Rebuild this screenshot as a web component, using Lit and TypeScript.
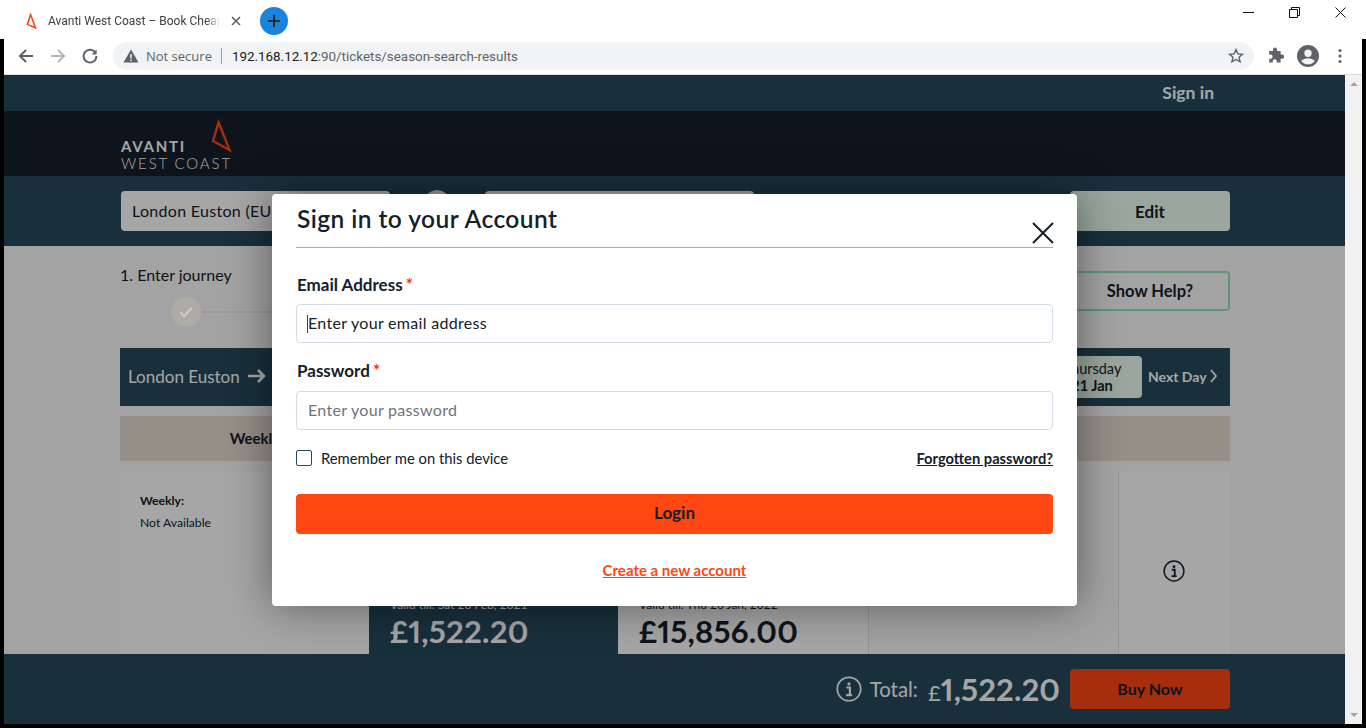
import { LitElement, html, css, svg } from 'lit';
import { customElement } from 'lit/decorators.js';

const infoIcon = (size: number) => html`
  <svg width=${size} height=${size} viewBox="0 0 24 24" fill="none" stroke="currentColor" stroke-width="1.6">
    <circle cx="12" cy="12" r="10.8"></circle>
    <circle cx="12" cy="7.3" r="1.5" fill="currentColor" stroke="none"></circle>
    <path d="M9.6 10.6h3.2v6.6M9.4 17.6h5.4" stroke-width="2"></path>
  </svg>`;

const chevron = svg`<path d="M1 1l5 6-5 6" fill="none" stroke="currentColor" stroke-width="1.8"></path>`;

@customElement('browser-chrome')
export class BrowserChrome extends LitElement {
  static styles = css`
    :host {
      display: block;
      height: 75px;
      background: #000;
      font-family: 'Open Sans', 'Noto Sans', sans-serif;
    }
    .tabs {
      height: 39px;
      box-sizing: border-box;
      background: #fff;
      display: flex;
      align-items: center;
      padding: 2px 0 0 26px;
    }
    .fav { margin-right: 11px; margin-top: 1px; }
    .title {
      width: 172px;
      font-family: Roboto, sans-serif;
      font-size: 12px;
      color: #3c4043;
      white-space: nowrap;
      -webkit-mask-image: linear-gradient(90deg, #000 92%, transparent);
      mask-image: linear-gradient(90deg, #000 92%, transparent);
    }
    .tab-x { margin-left: 11px; }
    .new-tab {
      margin-left: 19px;
      width: 28px;
      height: 28px;
      border-radius: 50%;
      background: #1a84dc;
      display: flex;
      align-items: center;
      justify-content: center;
    }
    .win {
      margin-left: auto;
      display: flex;
      align-items: center;
      gap: 35px;
      padding-right: 20px;
      margin-top: -17px;
    }
    .bar {
      height: 36px;
      display: flex;
      align-items: center;
      margin: 0 4px;
      background: #fff;
      border-bottom: 1px solid #dadce0;
      box-sizing: border-box;
      padding: 0 0 1px 13px;
    }
    .nav { display: flex; gap: 14px; margin-right: 14px; }
    .omni {
      width: 1141px;
      height: 28px;
      border-radius: 14px;
      background: #f1f3f4;
      display: flex;
      align-items: center;
      padding: 0 10px 0 10px;
      box-sizing: border-box;
      font-family: Roboto, sans-serif;
      font-size: 13.4px;
      color: #5f6368;
    }
    .secure { margin: 0 9px 0 0; color: #5f6368; font-family: 'Open Sans', sans-serif; font-size: 13px; }
    .sep { width: 1px; height: 16px; background: #9aa0a6; margin-right: 10px; }
    .host { color: #202124; }
    .star { margin-left: auto; margin-right: 0; }
    .tools { display: flex; align-items: center; margin-left: 12px; gap: 13px; }
  `;

  render() {
    return html`
      <div class="tabs">
        <svg class="fav" width="11" height="16" viewBox="0 0 11 16" fill="none" stroke="#ff4713" stroke-width="1.6">
          <path d="M4.6 1.6 1.4 11.4l8 3.4z"></path>
        </svg>
        <span class="title">Avanti West Coast – Book Cheap</span>
        <svg class="tab-x" width="10" height="10" viewBox="0 0 10 10" stroke="#5f6368" stroke-width="1.6"><path d="M1 1l8 8M9 1l-8 8"></path></svg>
        <span class="new-tab">
          <svg width="14" height="14" viewBox="0 0 14 14" stroke="#1f2a33" stroke-width="2"><path d="M7 1v12M1 7h12"></path></svg>
        </span>
        <div class="win">
          <svg width="11" height="11" viewBox="0 0 11 11" stroke="#111"><path d="M0 5.5h11"></path></svg>
          <svg width="11" height="11" viewBox="0 0 11 11" fill="none" stroke="#111"><path d="M.5 2.5h8v8h-8zM2.5 2.5v-2h8v8h-2"></path></svg>
          <svg width="11" height="11" viewBox="0 0 11 11" stroke="#111"><path d="M.5.5l10 10M10.5.5l-10 10"></path></svg>
        </div>
      </div>
      <div class="bar">
        <div class="nav">
          <svg width="18" height="18" viewBox="0 0 18 18" fill="none" stroke="#5f6368" stroke-width="2"><path d="M16 9H3M9 3 3 9l6 6"></path></svg>
          <svg width="18" height="18" viewBox="0 0 18 18" fill="none" stroke="#b4b7ba" stroke-width="2"><path d="M2 9h13M9 3l6 6-6 6"></path></svg>
          <svg width="18" height="18" viewBox="0 0 18 18" fill="none" stroke="#5f6368" stroke-width="2"><path d="M14.6 6A6.4 6.4 0 1 0 15.4 9"></path><path d="M15.6 2.4v5h-5z" fill="#5f6368" stroke="none"></path></svg>
        </div>
        <div class="omni">
          <svg width="16" height="14" viewBox="0 0 16 14" style="margin-right:7px"><path d="M8 .5 15.5 13.5H.5z" fill="#5f6368"></path><path d="M8 5v4.4M8 10.4v1.6" stroke="#f1f3f4" stroke-width="1.5"></path></svg>
          <span class="secure">Not secure</span>
          <span class="sep"></span>
          <span><span class="host">192.168.12.12</span>:90/tickets/season-search-results</span>
          <svg class="star" width="16" height="16" viewBox="0 0 16 16" fill="none" stroke="#5f6368" stroke-width="1.4"><path d="M8 1.6l1.9 4.3 4.6.4-3.5 3 1.1 4.6L8 11.5l-4.1 2.4L5 9.3l-3.5-3 4.6-.4z"></path></svg>
        </div>
        <div class="tools">
          <svg width="18" height="18" viewBox="0 0 18 18" fill="#5f6368"><path d="M7 2.6a2 2 0 0 1 4 0V4h3.6v3.6H16a2.1 2.1 0 0 1 0 4.2h-1.4v3.8h-3.8v-1.3a2 2 0 0 0-4 0v1.3H3.2v-3.8h1.3a2.1 2.1 0 0 0 0-4.2H3.2V4H7z"></path></svg>
          <svg width="22" height="22" viewBox="0 0 24 24"><circle cx="12" cy="12" r="12" fill="#5f6368"></circle><circle cx="12" cy="9" r="4" fill="#f1f3f4"></circle><path d="M4.6 17.4c3.5-3.8 11.3-3.8 14.8 0a9.2 9.2 0 0 1-14.8 0z" fill="#f1f3f4"></path></svg>
          <svg width="16" height="16" viewBox="0 0 16 16" fill="#5f6368"><circle cx="8" cy="2.5" r="1.6"></circle><circle cx="8" cy="8" r="1.6"></circle><circle cx="8" cy="13.5" r="1.6"></circle></svg>
        </div>
      </div>
    `;
  }
}

@customElement('ticket-page')
export class TicketPage extends LitElement {
  static styles = css`
    :host {
      display: flex;
      flex-direction: column;
      height: 649px;
      background: #fbfbfb;
      color: #14202a;
      font-family: Lato, sans-serif;
      overflow: hidden;
    }
    .signin {
      height: 36px;
      flex: none;
      box-sizing: border-box;
      padding: 0 131px 2px 0;
      background: #264a5c;
      color: #fff;
      font-weight: 700;
      font-size: 17.5px;
      display: flex;
      align-items: center;
      justify-content: flex-end;
    }
    .brand {
      height: 65px;
      flex: none;
      background: #14202a;
      padding-left: 117px;
      display: flex;
      align-items: flex-start;
      color: #fff;
    }
    .logo { position: relative; width: 112px; height: 65px; }
    .avanti { position: absolute; left: 0; top: 27px; font-size: 15px; font-weight: 700; letter-spacing: 1.75px; line-height: 16px; }
    .west { position: absolute; left: 0; top: 44px; font-size: 15px; font-weight: 300; letter-spacing: 1.85px; line-height: 16px; white-space: nowrap; }
    .logo svg { position: absolute; left: 88px; top: 8px; }
    .search {
      height: 70px;
      flex: none;
      background: #264a5c;
      padding: 15px 115px 0 117px;
      box-sizing: border-box;
      display: flex;
      align-items: flex-start;
    }
    .field {
      width: 269px;
      height: 40px;
      box-sizing: border-box;
      border-radius: 4px;
      background: #fff;
      padding: 0 11px;
      line-height: 40px;
      font-size: 16px;
      letter-spacing: .3px;
    }
    .swap { width: 32px; height: 42px; margin: -1px 32px 0 31px; border-radius: 50%; background: #e8eef0; }
    .edit {
      margin-left: auto;
      width: 160px;
      height: 40px;
      border-radius: 4px;
      background: #edfff3;
      font-weight: 700;
      font-size: 17px;
      text-align: center;
      line-height: 41px;
    }
    .body { flex: 1; min-height: 0; padding: 0 115px 0 116px; overflow: hidden; }
    .steps { height: 102px; display: flex; justify-content: space-between; position: relative; }
    .step { padding: 18px 0 0; font-size: 16px; line-height: 22px; }
    /* sits above the dim layer, the reference keeps its tick bright */
    .tick {
      position: relative;
      z-index: 1;
      width: 30px; height: 30px; border-radius: 50%;
      background: #aeaaa5; margin: 11px 0 0 51px;
      display: flex; align-items: center; justify-content: center;
    }
    .line { position: absolute; left: 80px; top: 65px; width: 400px; height: 2px; background: #f1eae2; }
    .help {
      margin-top: 25px;
      width: 160px; height: 40px; box-sizing: border-box;
      border: 2px solid #8fe3bc; border-radius: 4px;
      font-weight: 700; font-size: 16.5px; text-align: center; line-height: 36px;
    }
    .journey {
      height: 58px;
      box-sizing: border-box;
      padding: 0 0 2px 8px;
      background: #264a5c;
      color: #fff;
      display: flex;
      align-items: center;
      font-size: 17px;
    }
    .journey svg.arrow { margin-left: 8px; }
    .date {
      margin-left: auto;
      width: 110px;
      height: 42px;
      margin-top: 2px;
      border-radius: 4px;
      background: #edfff3;
      color: #14202a;
      font-size: 14.5px;
      line-height: 17px;
      text-align: center;
      padding: 4px 0 0 10px;
      box-sizing: border-box;
    }
    .date b { display: block; }
    .next { display: flex; align-items: center; gap: 3px; width: 88px; padding-left: 6px; box-sizing: border-box; font-size: 14px; font-weight: 700; }
    .tabs {
      margin-top: 10px;
      height: 45px;
      background: #e6dcd1;
      display: flex;
      font-weight: 700;
      font-size: 15px;
    }
    .tabs span { width: 270px; text-align: center; line-height: 45px; }
    .cards { margin-top: 10px; display: grid; grid-template-columns: 249px 249px 250px 251px 111px; height: 200px; }
    .card { background: #fff; box-sizing: border-box; position: relative; }
    .weekly { padding: 22px 20px; font-size: 12.2px; }
    .weekly b { display: block; margin-bottom: 7px; }
    .dark { background: #264a5c; color: #fff; }
    .plain { background: #fbfbfb; border-left: 1px solid #e2e2e2; border-right: 1px solid #e2e2e2; }
    .price-box { position: absolute; left: 21px; top: 127px; }
    .valid { font-size: 12px; line-height: 14px; }
    .price { font-size: 31px; font-weight: 700; line-height: 38px; letter-spacing: .25px; font-variant-numeric: proportional-nums; }
    .more { display: flex; align-items: center; justify-content: center; padding-right: 2px; }
    .footer {
      height: 70px;
      flex: none;
      box-sizing: border-box;
      padding: 0 115px 1px 0;
      background: #264a5c;
      color: #fff;
      display: flex;
      align-items: center;
      justify-content: flex-end;
    }
    .footer svg { margin-right: 8px; }
    .total { font-size: 20.4px; margin-right: 10px; }
    .amount { font-size: 31px; font-weight: 700; margin-right: 10px; letter-spacing: .1px; font-variant-numeric: proportional-nums; }
    .amount small { font-size: 22px; font-weight: 400; }
    .buy {
      width: 160px; height: 40px; border-radius: 4px;
      background: #ff4713; color: #14202a;
      font-weight: 700; font-size: 16px; text-align: center; line-height: 40px;
    }
  `;

  render() {
    return html`
      <div class="signin">Sign in</div>
      <div class="brand">
        <div class="logo">
          <span class="avanti">AVANTI</span>
          <span class="west">WEST COAST</span>
          <svg width="24" height="34" viewBox="0 0 24 34" fill="none" stroke="#ff4713" stroke-width="2.4"><path d="M9.6 3.4 4 22 20.6 31z"></path></svg>
        </div>
      </div>
      <div class="search">
        <div class="field">London Euston (EUS)</div>
        <div class="swap"></div>
        <div class="field"></div>
        <div class="edit">Edit</div>
      </div>
      <div class="body">
        <div class="steps">
          <div class="line"></div>
          <div>
            <div class="step">1. Enter journey</div>
            <div class="tick">
              <svg width="14" height="12" viewBox="0 0 14 12" fill="none" stroke="#d0d0d0" stroke-width="2"><path d="M1.5 6.5l3.6 3.6 7.4-8"></path></svg>
            </div>
          </div>
          <div class="help">Show Help?</div>
        </div>
        <div class="journey">
          <span>London Euston</span>
          <svg class="arrow" width="18" height="14" viewBox="0 0 18 14" fill="none" stroke="currentColor" stroke-width="2.6"><path d="M0 7h16M10 1l6 6-6 6"></path></svg>
          <div class="date">Thursday<b>21 Jan</b></div>
          <div class="next">Next Day<svg width="8" height="14" viewBox="0 0 8 14">${chevron}</svg></div>
        </div>
        <div class="tabs"><span>Weekly</span></div>
        <div class="cards">
          <div class="card weekly"><b>Weekly:</b>Not Available</div>
          <div class="card dark"><div class="price-box"><div class="valid">Valid till: Sat 20 Feb, 2021</div><div class="price">£1,522.20</div></div></div>
          <div class="card"><div class="price-box"><div class="valid">Valid till: Thu 20 Jan, 2022</div><div class="price">£15,856.00</div></div></div>
          <div class="card plain"></div>
          <div class="card more">${infoIcon(22)}</div>
        </div>
      </div>
      <div class="footer">
        ${infoIcon(26)}
        <span class="total">Total:</span>
        <span class="amount"><small>£</small>1,522.20</span>
        <div class="buy">Buy Now</div>
      </div>
    `;
  }
}

@customElement('login-modal')
export class LoginModal extends LitElement {
  static styles = css`
    :host {
      display: block;
      width: 805px;
      height: 412px;
      box-sizing: border-box;
      padding: 0 24px;
      background: #fff;
      border-radius: 4px;
      color: #14202a;
      font-family: Lato, sans-serif;
      box-shadow: 0 0 45px rgba(0, 0, 0, .45);
    }
    .head {
      height: 54px;
      box-sizing: border-box;
      border-bottom: 1px solid #a9adb0;
      display: flex;
      justify-content: space-between;
    }
    h2 { margin: 10px 0 0 1px; font-size: 24.5px; font-weight: 600; line-height: 30px; letter-spacing: .45px; }
    .close { margin: 28px -1px 0 0; }
    label { display: block; font-size: 17px; font-weight: 700; line-height: 20px; margin: 27px 0 9px 1px; }
    .second { margin: 18px 0 10px 1px; }
    label i { color: #ff2a13; font-style: normal; font-weight: 700; margin-left: -1px; }
    .input-wrap { position: relative; }
    input[type='text'] {
      display: block;
      width: 100%;
      height: 39px;
      box-sizing: border-box;
      border: 1px solid #d3dce6;
      border-radius: 4px;
      padding: 0 11px 2px;
      font: 16px Lato, sans-serif;
      letter-spacing: .3px;
      outline: none;
    }
    input::placeholder { color: #6e7479; opacity: 1; }
    .focused::placeholder { color: #14202a; }
    .caret { position: absolute; left: 11px; top: 11px; width: 1px; height: 18px; background: #1c3aa9; }
    .row { display: flex; align-items: center; justify-content: space-between; margin-top: 20px; height: 16px; font-size: 14.8px; }
    .check { display: flex; align-items: center; gap: 9px; }
    .box { width: 16px; height: 16px; box-sizing: border-box; border: 1px solid #264a5c; border-radius: 2px; }
    .forgot { font-weight: 700; font-size: 14.7px; color: #14202a; text-decoration: underline; }
    .login {
      margin-top: 28px;
      height: 40px;
      box-sizing: border-box;
      padding-bottom: 2px;
      border-radius: 4px;
      background: #ff4713;
      text-align: center;
      line-height: 38px;
      font-weight: 700;
      font-size: 17px;
    }
    .create { margin-top: 27px; text-align: center; font-size: 15px; font-weight: 700; }
    .create a { color: #ff4713; text-decoration: underline; }
  `;

  render() {
    return html`
      <div class="head">
        <h2>Sign in to your Account</h2>
        <svg class="close" width="22" height="22" viewBox="0 0 22 22" stroke="#14202a" stroke-width="2"><path d="M1 1l20 20M21 1 1 21"></path></svg>
      </div>
      <label>Email Address <i>*</i></label>
      <div class="input-wrap">
        <input type="text" class="focused" placeholder="Enter your email address" />
        <span class="caret"></span>
      </div>
      <label class="second">Password <i>*</i></label>
      <div class="input-wrap">
        <input type="text" placeholder="Enter your password" />
      </div>
      <div class="row">
        <span class="check"><span class="box"></span>Remember me on this device</span>
        <a class="forgot">Forgotten password?</a>
      </div>
      <div class="login">Login</div>
      <div class="create"><a>Create a new account</a></div>
    `;
  }
}

@customElement('app-root')
export class AppRoot extends LitElement {
  static styles = css`
    :host {
      display: block;
      width: 1366px;
      height: 728px;
      overflow: hidden;
      background: #000;
    }
    .main { display: flex; margin: 0 4px; height: 649px; position: relative; }
    ticket-page { width: 1341px; flex: none; }
    .scroll {
      width: 17px;
      background: #f1f1f1;
      display: flex;
      flex-direction: column;
      justify-content: space-between;
      align-items: center;
      padding: 7px 0;
      box-sizing: border-box;
    }
    .scroll i { width: 0; height: 0; border: 4px solid transparent; }
    .up { border-bottom: 4px solid #a3a3a3 !important; border-top: 0 !important; }
    .down { border-top: 4px solid #a3a3a3 !important; border-bottom: 0 !important; }
    .overlay {
      position: absolute;
      left: 0;
      top: 0;
      width: 1341px;
      height: 649px;
      background: rgba(0, 0, 0, .35);
      display: flex;
      align-items: center;
      justify-content: center;
    }
  `;

  render() {
    return html`
      <browser-chrome></browser-chrome>
      <div class="main">
        <ticket-page></ticket-page>
        <div class="scroll"><i class="up"></i><i class="down"></i></div>
        <div class="overlay"><login-modal></login-modal></div>
      </div>
    `;
  }
}
